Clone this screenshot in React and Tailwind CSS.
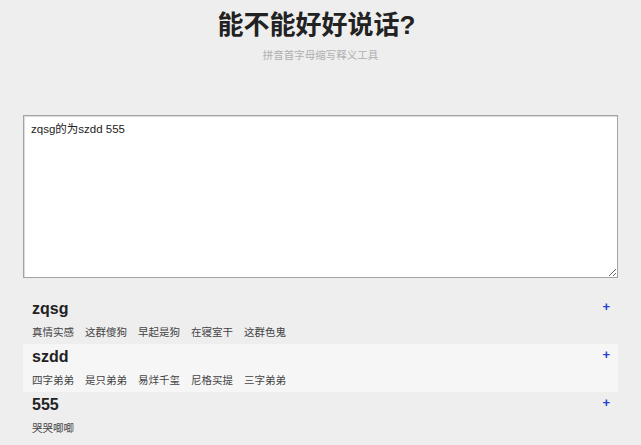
const rows = [
  { key: "zqsg", words: ["真情实感", "这群傻狗", "早起是狗", "在寝室干", "这群色鬼"] },
  { key: "szdd", words: ["四字弟弟", "是只弟弟", "易烊千玺", "尼格买提", "三字弟弟"], alt: true },
  { key: "555", words: ["哭哭唧唧"] },
];

export default function App() {
  return (
    <div className="min-h-[445px] w-full bg-[#eeeeee] text-[#222] [font-family:'Liberation_Sans','Noto_Sans_CJK_SC',sans-serif]">
      <div className="flex flex-col items-center">
        <h1 className="mt-[10px] pr-[8px] text-[26px] leading-[30px] font-bold text-[#222]">
          能不能好好说话?
        </h1>
        <p className="mt-[7px] text-[10.5px] leading-[16px] text-[#b0b0b0]">
          拼音首字母缩写释义工具
        </p>
      </div>

      <div className="px-[23px] mt-[52px]">
        <textarea
          spellCheck={false}
          defaultValue="zqsg的为szdd 555"
          className="block w-full h-[163px] bg-white border border-[#a3a3a3] shadow-[inset_1px_1px_1px_rgba(0,0,0,0.15)] px-[7px] pt-[6px] text-[11.5px] leading-[15px] text-[#222] outline-none resize-y [font-family:'Liberation_Sans','Noto_Sans_CJK_SC',sans-serif]"
        />

        <div className="mt-[18px] flex flex-col">
          {rows.map((r) => (
            <div
              key={r.key}
              className={`relative px-[9px] pt-[3px] pb-[4px] ${r.alt ? "bg-[#f6f6f6]" : ""}`}
            >
              <div className="text-[16px] leading-[20px] font-bold text-[#222]">{r.key}</div>
              <div className="mt-[5px] flex gap-[11px] text-[10.5px] leading-[16px] text-[#444]">
                {r.words.map((w) => (
                  <span key={w}>{w}</span>
                ))}
              </div>
              <span className="absolute right-[8px] top-[3px] text-[13px] leading-[16px] font-bold text-[#2a3fc8]">
                +
              </span>
            </div>
          ))}
        </div>
      </div>
    </div>
  );
}
